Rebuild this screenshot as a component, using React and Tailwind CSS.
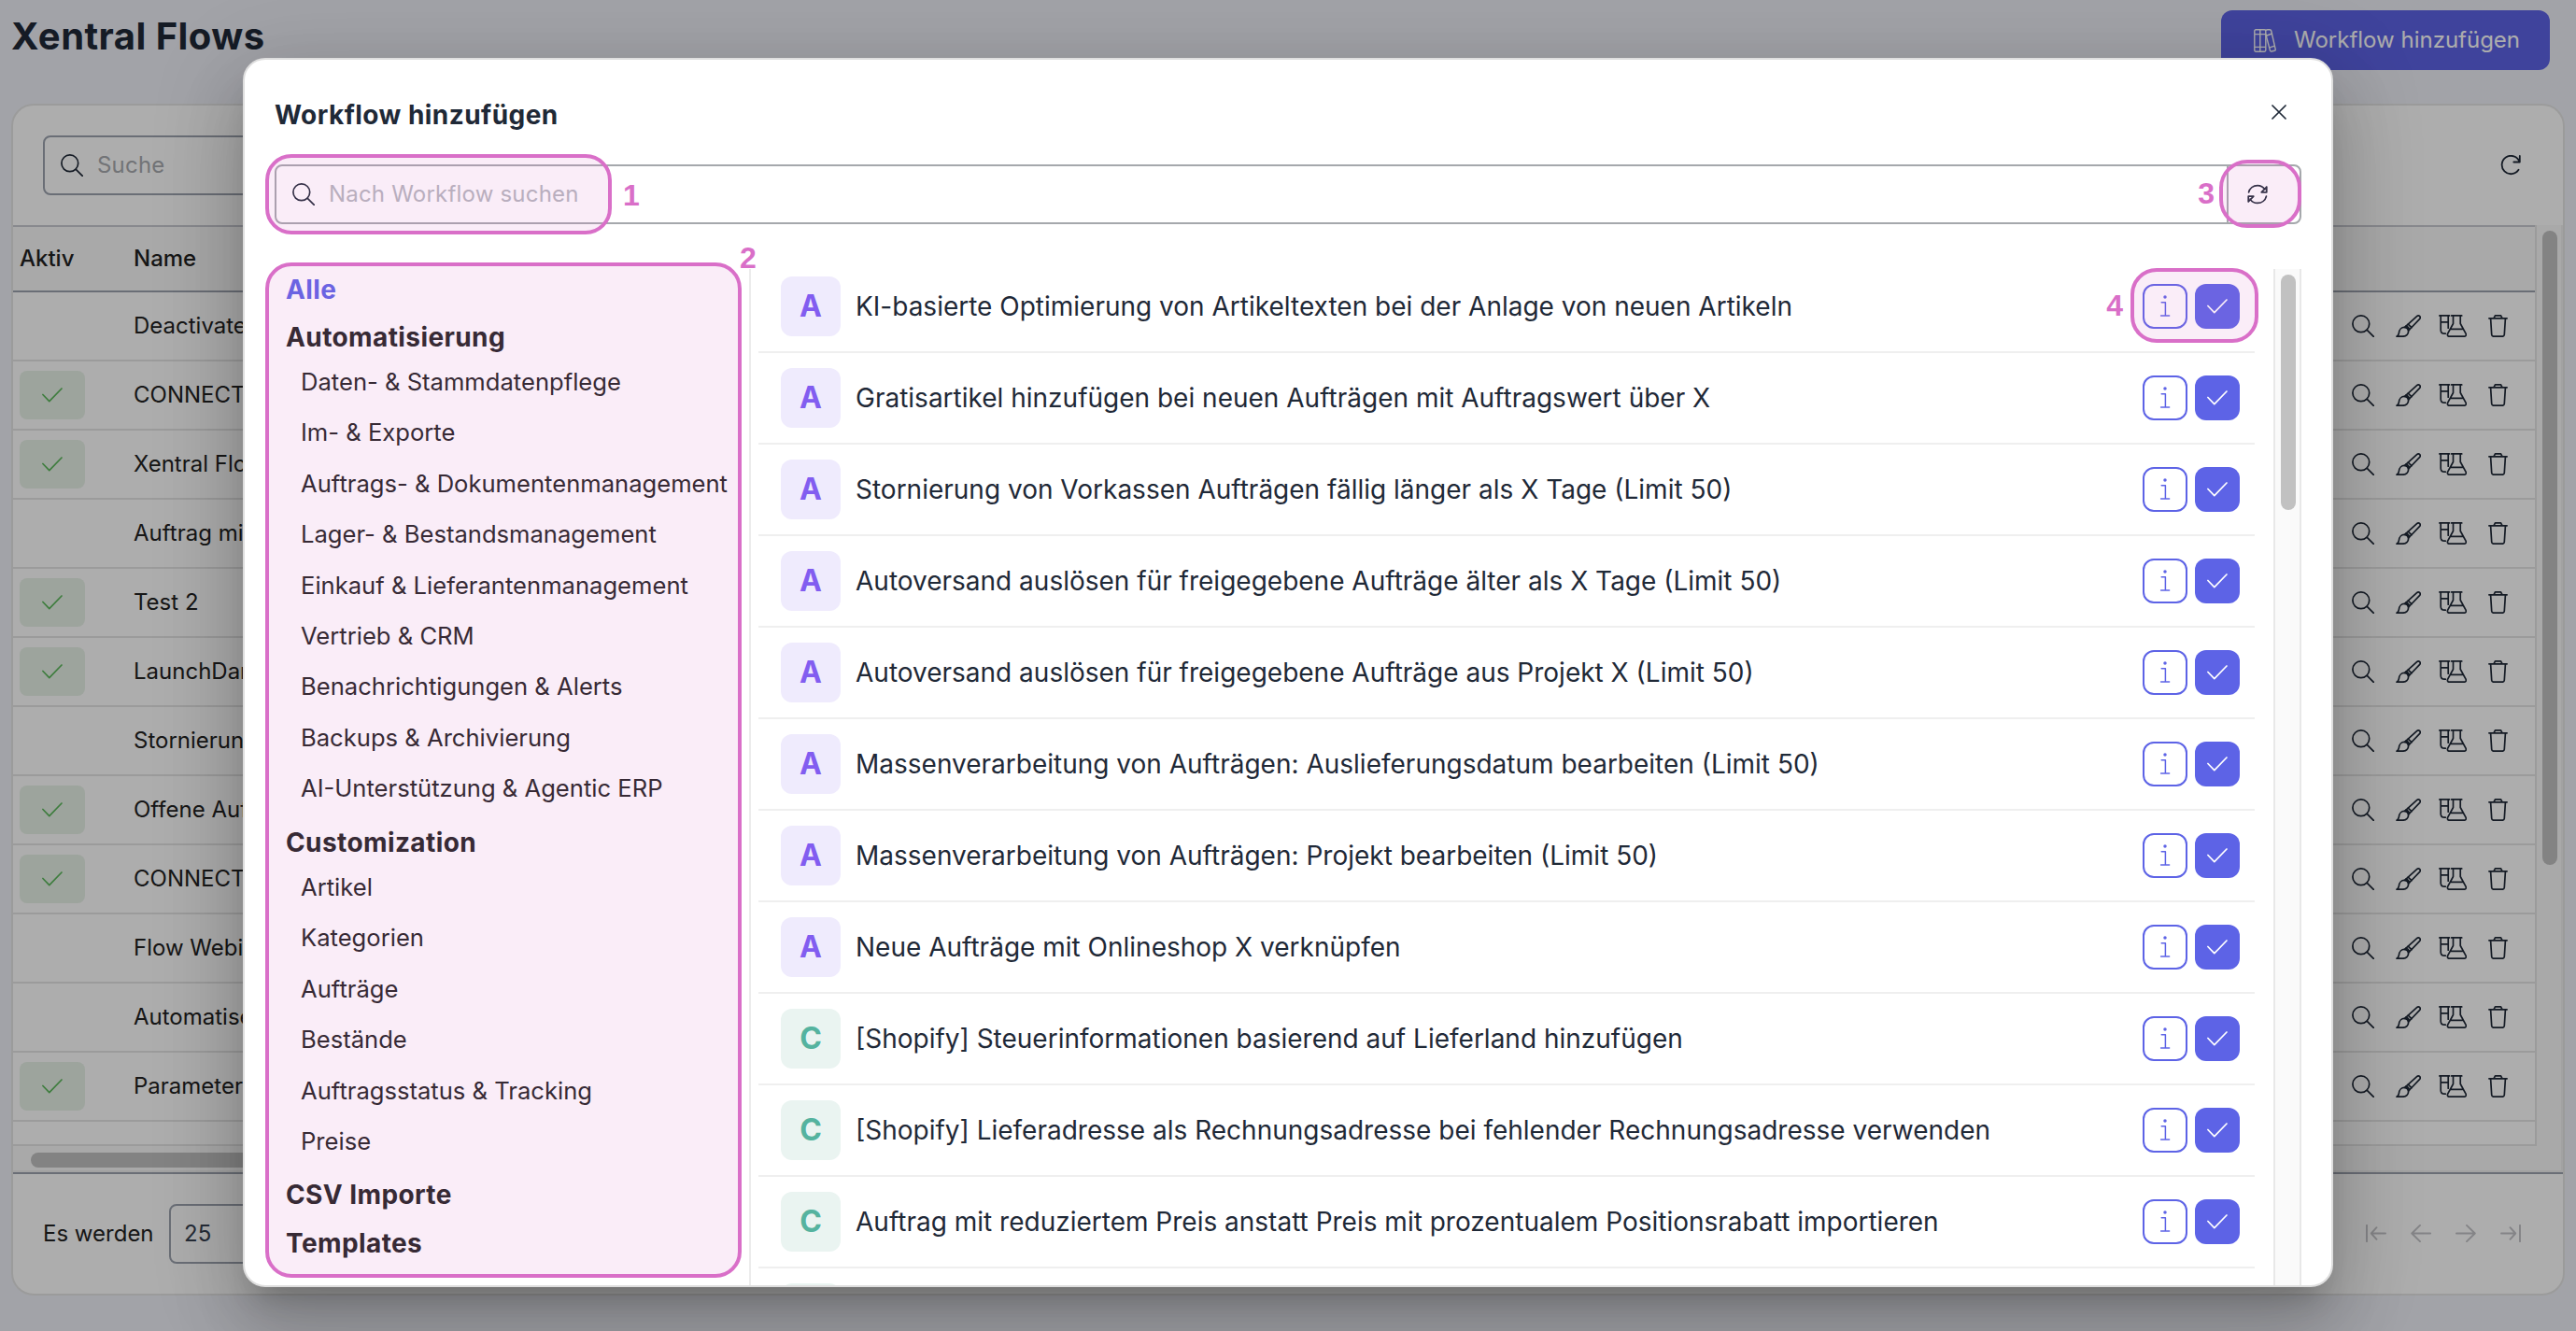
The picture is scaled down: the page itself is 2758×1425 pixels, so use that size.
const Svg = ({ w, h, className = "", sw = 1.7, children }) => (
  <svg width={w} height={h} viewBox={`0 0 ${w} ${h}`} fill="none" stroke="currentColor" strokeWidth={sw} strokeLinecap="round" strokeLinejoin="round" className={`block shrink-0 ${className}`}>
    {children}
  </svg>
);

const SearchIcon = (p) => (
  <Svg w={24} h={24} {...p}>
    <circle cx="9.8" cy="9.8" r="8.9" />
    <path d="M16.3 16.3 23.3 23.3" />
  </Svg>
);
const BrushIcon = (p) => (
  <Svg w={27} h={24} {...p}>
    <path d="M9.6 13.4 22.6 1.6c1-.9 2.3-.9 3.100 0 .8.9.7 2.200-.2 3.100L13.6 17" />
    <path d="M13.300 10.200 16.900 13.700M11 12.100c2 .6 3.200 2 3.500 3.800" />
    <path d="M9.600 13.400c2.200.3 3.700 1.600 4 3.600.2 3.800-2.600 6.200-6.200 6.200H1c1.500-.8 2.200-1.800 2.400-3.600.3-3.800 2.800-6.400 6.200-6.200z" />
  </Svg>
);
const LabIcon = (p) => (
  <Svg w={30} h={24} {...p}>
    <path d="M.9.9h10.600M2.200.9v15.300c0 2.800 2 4 4 4h1M10.200.9v13.300M2.200 7.900h8" />
    <path d="M13.700.9h11M15.500.9v8.600L9.800 19.800c-1 2 0 3.400 1.800 3.400h15.600c1.900 0 2.700-1.500 1.700-3.400L23.200 9.500V.9M12.500 15.300h13.800" />
  </Svg>
);
const TrashIcon = (p) => (
  <Svg w={21} h={24} {...p}>
    <path d="M.9 3.800h19.200M6 3.600 7.200 1.300c.2-.3.5-.5.9-.5h4.800c.4 0 .7.2.9.5L15 3.600M2.600 3.900l1.100 17.400c.1 1.200.9 1.900 2.100 1.900h9.400c1.200 0 2-.7 2.100-1.900l1.100-17.400" />
  </Svg>
);
const ReloadIcon = () => (
  <Svg w={22} h={22} sw={1.800}>
    <path d="M20.800 1v6.500h-6.500M20.500 7.300A9.700 9.700 0 1 0 19.500 15.800" />
  </Svg>
);
const SyncIcon = () => (
  <Svg w={22} h={22} sw={1.700}>
    <path d="M1.600 8.800C2.600 4.600 6.400 1.600 11 1.600c3.400 0 6.300 1.700 8 4.300M20.800 3v5.800h-5.600zM20.400 13.200c-1 4.200-4.800 7.200-9.400 7.200-3.400 0-6.300-1.700-8-4.300M1.200 19v-5.800h5.600z" />
  </Svg>
);
const CheckIcon = ({ className = "" }) => (
  <Svg w={22} h={16} sw={1.700} className={className}>
    <path d="M.9 7.500 7.800 14.700 21 1" />
  </Svg>
);
const InfoIcon = () => (
  <Svg w={12} h={24} sw={1.500}>
    <path d="M2.200 7.700h4.200v14M1.600 22h9" />
    <circle cx="6" cy="2" r="1" fill="currentColor" />
  </Svg>
);
const BooksIcon = () => (
  <Svg w={24} h={25} sw={1.400}>
    <path d="M.8 2.200c0-.8.600-1.400 1.400-1.400h9.200c.8 0 1.400.6 1.400 1.400v20.600c0 .8-.6 1.400-1.400 1.400H2.200c-.8 0-1.400-.6-1.400-1.400zM6.800.8v23.400M.8 5.600h12M.8 19.400h12" />
    <path d="M12.800 1.400c.6-.4 1.200-.6 2-.6h2.200c.9 0 1.500.4 1.700 1.200l4.500 19.600c.2.900-.3 1.500-1 1.700l-3 .7c-.8.2-1.600-.2-1.800-1.100L12.800 5.500M14 7l5.600-2M17.200 19.800l5.200-1.700" />
  </Svg>
);
const CloseIcon = () => (
  <Svg w={16} h={16} sw={1.700}>
    <path d="M1 1 15 15M15 1 1 15" />
  </Svg>
);

const pagers = [
  "M1 .8v17.400M21 9.500H6.500M11.500 3.200 5.800 9.500l5.700 6.300",
  "M21.200 9.500H1.200M10 .9 1.200 9.500 10 18.100",
  "M.8 9.500h20M12 .9l8.800 8.600L12 18.100",
  "M21 .8v17.400M1 9.500h14.500M10.500 3.200l5.700 6.300-5.700 6.300",
];

const tableRows = [
  [false, "Deactivate"],
  [true, "CONNECT"],
  [true, "Xentral Flow"],
  [false, "Auftrag mit"],
  [true, "Test 2"],
  [true, "LaunchDark"],
  [false, "Stornierung"],
  [true, "Offene Auf"],
  [true, "CONNECT"],
  [false, "Flow Webi"],
  [false, "Automatise"],
  [true, "Parameter"],
];

const categories = [
  ["Alle", []],
  [
    "Automatisierung",
    [
      "Daten- & Stammdatenpflege",
      "Im- & Exporte",
      "Auftrags- & Dokumentenmanagement",
      "Lager- & Bestandsmanagement",
      "Einkauf & Lieferantenmanagement",
      "Vertrieb & CRM",
      "Benachrichtigungen & Alerts",
      "Backups & Archivierung",
      "AI-Unterstützung & Agentic ERP",
    ],
  ],
  ["Customization", ["Artikel", "Kategorien", "Aufträge", "Bestände", "Auftragsstatus & Tracking", "Preise"]],
  ["CSV Importe", []],
  ["Templates", []],
];

const workflows = [
  ["A", "KI-basierte Optimierung von Artikeltexten bei der Anlage von neuen Artikeln"],
  ["A", "Gratisartikel hinzufügen bei neuen Aufträgen mit Auftragswert über X"],
  ["A", "Stornierung von Vorkassen Aufträgen fällig länger als X Tage (Limit 50)"],
  ["A", "Autoversand auslösen für freigegebene Aufträge älter als X Tage (Limit 50)"],
  ["A", "Autoversand auslösen für freigegebene Aufträge aus Projekt X (Limit 50)"],
  ["A", "Massenverarbeitung von Aufträgen: Auslieferungsdatum bearbeiten (Limit 50)"],
  ["A", "Massenverarbeitung von Aufträgen: Projekt bearbeiten (Limit 50)"],
  ["A", "Neue Aufträge mit Onlineshop X verknüpfen"],
  ["C", "[Shopify] Steuerinformationen basierend auf Lieferland hinzufügen"],
  ["C", "[Shopify] Lieferadresse als Rechnungsadresse bei fehlender Rechnungsadresse verwenden"],
  ["C", "Auftrag mit reduziertem Preis anstatt Preis mit prozentualem Positionsrabatt importieren"],
  ["", ""],
];

function Page() {
  return (
    <div className="flex h-full flex-col bg-[#eff1f8] px-3 text-[#222]">
      <header className="flex h-[111px] shrink-0 items-start justify-between pr-4">
        <h1 className="pt-[15px] text-[40px] leading-[48px] font-bold tracking-[0.45px] text-[#1f2937]">Xentral Flows</h1>
        <button className="mt-[11px] flex h-16 w-[352px] items-center gap-[19px] rounded-xl bg-[#5d63e6] pl-[35px] text-[24px] text-white">
          <BooksIcon />
          Workflow hinzufügen
        </button>
      </header>

      <section className="flex h-[1276px] shrink-0 flex-col overflow-hidden rounded-[24px] border-2 border-[#e5e5e5] bg-white">
        <div className="flex h-[128px] shrink-0 items-start justify-between pt-8 pr-[45px] pl-8">
          <div className="flex h-16 w-[600px] items-center gap-[15px] rounded-lg border-2 border-[#9ca3af] pl-[17px] text-[24px] tracking-[0.2px] text-[#a9abb0]">
            <SearchIcon className="text-[#1f2937]" />
            Suche
          </div>
          <div className="pt-[21px] text-[#1f2937]"><ReloadIcon /></div>
        </div>

        <div className="flex h-[1014px] shrink-0">
          <div className="flex grow flex-col">
            <div className="h-[986px] overflow-hidden border-r-2 border-b-2 border-[#e5e5e5]">
              <div className="flex h-[72px] items-center border-y-2 border-t-[#c9cbd2] border-b-[#9ca3af] bg-[#fafafa] pb-px pl-[7px] text-[24px] font-medium">
                <span className="w-[122px]">Aktiv</span>
                <span>Name</span>
              </div>
              {tableRows.map(([active, name], i) => (
                <div key={i} className="flex h-[74px] items-center border-b-2 border-[#e5e5e5] pr-[29px] pl-[7px]">
                  <div className="w-[122px]">
                    {active && (
                      <div className="flex h-[52px] w-[70px] items-center justify-center rounded-lg bg-[#e8f2e8]">
                        <CheckIcon className="text-[#5cb85c]" />
                      </div>
                    )}
                  </div>
                  <span className="grow pb-px text-[24px]">{name}</span>
                  <div className="flex items-center text-[#1f2937]">
                    <SearchIcon className="mr-[23px]" />
                    <BrushIcon className="mr-[19px]" />
                    <LabIcon className="mr-[23px]" />
                    <TrashIcon />
                  </div>
                </div>
              ))}
              <div className="pt-[18px] pl-[129px] text-[24px] leading-[36px]">[Shopify]</div>
            </div>
            <div className="h-7 border-b-2 border-[#efefef] bg-[#fafafa] pt-[7px] pl-[19px]">
              <div className="h-4 w-[1400px] rounded-full bg-[#c1c1c1]" />
            </div>
          </div>
          <div className="flex w-[28px] border-r-2 border-b-2 border-[#efefef] bg-[#fafafa] pt-[6px] pl-[6px]">
            <div className="h-[679px] w-4 rounded-full bg-[#c1c1c1]" />
          </div>
        </div>

        <div className="flex grow items-center justify-between border-t-2 border-[#9ca3af] pr-[45px] pb-px pl-8 text-[24px]">
          <div className="flex items-center gap-[17px]">
            <span className="w-[118px] whitespace-nowrap">Es werden</span>
            <span className="flex h-16 w-[160px] items-center rounded-lg border-2 border-[#9ca3af] pl-[14px] text-[#374151]">25</span>
          </div>
          <div className="flex gap-[26px] text-[#c3c3c7]">
            {pagers.map((d) => (
              <Svg key={d} w={22} h={19} sw={1.900}><path d={d} /></Svg>
            ))}
          </div>
        </div>
      </section>
    </div>
  );
}

function Highlight({ className }) {
  return <div className={`pointer-events-none absolute border-4 border-[#d96fc8] bg-[#d36cc6]/12 ${className}`} />;
}

function Marker({ className, children }) {
  return <span className={`absolute font-['Liberation_Sans',sans-serif] text-[32px] leading-[36px] font-bold text-[#d96fc8] ${className}`}>{children}</span>;
}

function Sidebar() {
  return (
    <nav className="relative h-[1088px] w-[510px] shrink-0 border-r-2 border-[#ececec]">
      <div className="-mt-[3px] pl-3">
        {categories.map(([title, items]) => (
          <div key={title}>
            <div className={title === "Alle" ? "h-[50.5px] text-[28px] leading-[51.5px] font-bold tracking-[0.4px] text-[#5d63e6]" : "h-[51.5px] text-[28px] leading-[51.5px] font-bold tracking-[0.4px] text-[#222]"}>{title}</div>
            {items.map((item) => (
              <div key={item} className="h-[54.4px] pl-4 text-[25.6px] leading-[44.4px] whitespace-nowrap text-[#222]">{item}</div>
            ))}
          </div>
        ))}
      </div>
      <Highlight className="-top-[7px] -left-[10px] h-[1087px] w-[510px] rounded-[28px]" />
      <Marker className="-top-[30px] left-[498px]">2</Marker>
    </nav>
  );
}

function WorkflowRow({ letter, title, first }) {
  return (
    <li className={first ? "relative flex h-[90px] items-center border-b-2 border-[#efefef] pr-4 pb-2 pl-6" : "relative flex h-[98px] items-center border-b-2 border-[#efefef] pr-4 pl-6"}>
      <span className={letter === "A" ? "flex size-16 items-center justify-center rounded-xl bg-[#efebfd] text-[32px] font-bold text-[#825df0]" : "flex size-16 items-center justify-center rounded-xl bg-[#eaf4f1] text-[32px] font-bold text-[#55b39f]"}>{letter}</span>
      <span className="grow pl-4 text-[28px] whitespace-nowrap text-[#1f2937]">{title}</span>
      <button className="mr-2 flex size-12 items-center justify-center rounded-xl border-2 border-[#5d63e6] text-[#5d63e6]"><InfoIcon /></button>
      <button className="flex size-12 items-center justify-center rounded-xl bg-[#5d63e6] text-white"><CheckIcon /></button>
      {first && (
        <>
          <Highlight className="-top-px right-[-4px] h-[80px] w-[137px] rounded-[28px]" />
          <Marker className="top-[21px] right-[141px]">4</Marker>
        </>
      )}
    </li>
  );
}

function Dialog() {
  return (
    <div role="dialog" className="flex h-[1316px] w-[2238px] flex-col overflow-hidden rounded-[24px] border-2 border-[#dedede] bg-white px-8 shadow-[0_22px_30px_-14px_rgba(0,0,0,0.2),0_48px_76px_6px_rgba(0,0,0,0.14),0_18px_92px_16px_rgba(0,0,0,0.12)]">
      <div className="flex h-[112px] shrink-0 items-start justify-between pr-4">
        <h2 className="pt-[41px] text-[28px] leading-9 font-bold tracking-[0.45px] text-[#1f2937]">Workflow hinzufügen</h2>
        <button className="mt-12 text-[#1f2937]"><CloseIcon /></button>
      </div>
      <div className="relative mb-12 flex h-16 shrink-0 rounded-lg border-2 border-[#a5a8ac]">
        <div className="flex grow items-center gap-[15px] pl-[17px] text-[24px] tracking-[0.2px] text-[#b5b8bd]">
          <SearchIcon className="text-[#1f2937]" />
          Nach Workflow suchen
        </div>
        <button className="flex w-[78px] items-center border-l-2 border-[#a5a8ac] pl-5 text-[#1f2937]"><SyncIcon /></button>
        <Highlight className="-top-[13px] -left-3 h-[86px] w-[371px] rounded-[28px]" />
        <Marker className="top-[13px] left-[371px]">1</Marker>
        <Highlight className="-top-[7px] -right-[2px] h-[73px] w-[88px] rounded-[30px]" />
        <Marker className="top-[11px] right-[91px]">3</Marker>
      </div>
      <div className="flex h-[1088px] shrink-0">
        <Sidebar />
        <ul className="h-[1088px] grow pr-5 pl-2">
          {workflows.map(([letter, title], i) => (
            <WorkflowRow key={i} letter={letter} title={title} first={i === 0} />
          ))}
        </ul>
        <div className="flex w-[30px] border-x-2 border-[#e8e8e8] bg-[#fafafa] pt-[6px] pl-[6px]">
          <div className="h-[252px] w-4 rounded-full bg-[#c1c1c1]" />
        </div>
      </div>
    </div>
  );
}

export default function App() {
  return (
    <main className="relative h-[1425px] w-full overflow-hidden font-['Inter',sans-serif]">
      <Page />
      <div className="absolute inset-0 flex items-start justify-center bg-black/32 pt-[62px]">
        <Dialog />
      </div>
    </main>
  );
}
